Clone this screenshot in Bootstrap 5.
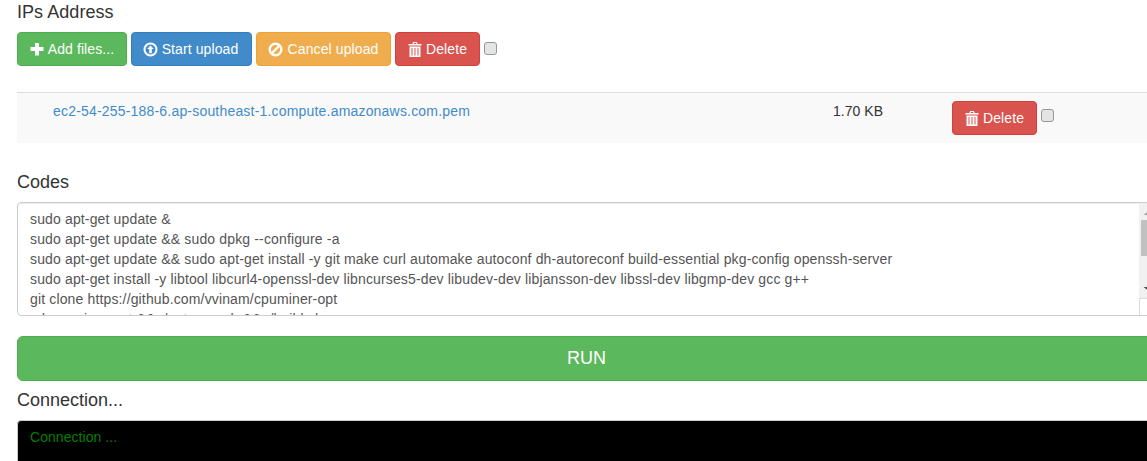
<!DOCTYPE html>
<html lang="en">
<head>
<meta charset="utf-8">
<title>IPs Address</title>
<link href="https://cdn.jsdelivr.net/npm/bootstrap@5.3.0/dist/css/bootstrap.min.css" rel="stylesheet">
<style>
html,body{overflow:hidden;height:461px;}
body{font-family:"Liberation Sans",Arial,sans-serif;font-size:14px;line-height:20px;color:#333;background:#fff;}
.sheet{width:1158px;padding-left:17px;box-sizing:content-box;}
.sheet-in{width:1141px;}
.ttl{font-size:18px;line-height:20px;font-weight:400;margin:0;color:#333;}
.ttl-a{padding-top:2px;margin-bottom:10px;letter-spacing:.05px;}
.ubtn{font-size:14px;line-height:20px;padding:6px 0;border-radius:4px;border:1px solid;color:#fff;display:inline-flex;align-items:center;justify-content:center;gap:4px;white-space:nowrap;text-decoration:none;letter-spacing:.1px;}
.ubtn svg{flex:none;display:block;}
.u-green{background:#5cb85c;border-color:#4cae4c;width:110px;}
.u-blue{background:#428bca;border-color:#357ebd;width:121px;padding-right:2px;}
.u-orange{background:#f0ad4e;border-color:#eea236;width:135px;gap:5px;padding-right:1px;}
.u-red{background:#d9534f;border-color:#d43f3a;width:85px;}
.ubtn:hover,.ubtn:focus{color:#fff;}
.cbx{appearance:none;-webkit-appearance:none;width:13px;height:13px;background:#e4e4e4;border:1px solid #969696;border-radius:3px;margin:0;flex:none;}
.cbx-top{margin-top:10px;}
.frow{margin-top:26px;height:51px;border-top:1px solid #ddd;background:#f9f9f9;display:flex;}
.fname{width:808px;padding:8px 8px 0 36px;}
.fname a{color:#428bca;text-decoration:none;letter-spacing:.19px;}
.fsize{width:119px;padding:8px 8px 0 8px;letter-spacing:.03px;}
.fact{padding-top:8px;padding-left:8px;display:flex;gap:4px;align-items:flex-start;}
.fact .cbx{margin-top:8px;}
.codes{margin-top:29px;margin-bottom:10px;}
.codewrap{position:relative;}
.codebox{display:block;width:100%;height:114px;padding:6px 30px 6px 12px;font:14px/20px "Liberation Sans",Arial,sans-serif;letter-spacing:.145px;color:#555;border:1px solid #ccc;border-radius:4px;background:#fff;box-shadow:inset 0 1px 1px rgba(0,0,0,.075);resize:none;overflow:hidden;outline:0;}
.sbar{position:absolute;top:1px;right:1px;display:block;}
.runbtn{display:block;width:100%;margin-top:20px;height:45px;font-size:18px;line-height:23px;padding:10px 18px 10px 16px;background:#5cb85c;border:1px solid #4cae4c;border-radius:6px;color:#fff;}
.conn{margin-top:9px;margin-bottom:10px;}
.console{height:80px;background:#000;color:#008000;border:1px solid #ccc;border-radius:4px;padding:6px 12px;font-size:14px;line-height:20px;letter-spacing:.05px;}
</style>
</head>
<body>
<div class="sheet">
<div class="sheet-in">
  <h4 class="ttl ttl-a">IPs Address</h4>
  <div class="d-flex gap-1 align-items-start">
    <a href="#" class="ubtn u-green"><svg width="14" height="14" viewBox="0 0 14 14" fill="#fff"><path d="M5 1h4v4h4.500v4H9v4.500H5V9H.5V5H5z"/></svg>Add files...</a>
    <a href="#" class="ubtn u-blue"><svg width="15" height="15" viewBox="0 0 15 15"><circle cx="7.500" cy="7.500" r="6" fill="none" stroke="#fff" stroke-width="2"/><path d="M7.500 3.500l3.300 3.500H8.800v4.200H6.200V7H4.200z" fill="#fff"/></svg>Start upload</a>
    <a href="#" class="ubtn u-orange"><svg width="15" height="15" viewBox="0 0 15 15" fill="none" stroke="#fff" stroke-width="2.400"><circle cx="7.500" cy="7.500" r="5.800"/><path d="M3.500 11.500l8-8"/></svg>Cancel upload</a>
    <a href="#" class="ubtn u-red"><svg width="14" height="15" viewBox="0 0 14 15" fill="#fff"><path d="M5 0h4l.6 2H13.500v1.500H.5V2h3.900zM5.800 1l-.2 1h2.800L8.200 1zM1.500 4.500h11V15h-11zM3.500 6v7.500h1V6zM6.500 6v7.500h1V6zM9.500 6v7.500h1V6z" fill-rule="evenodd"/></svg>Delete</a>
    <input type="checkbox" class="cbx cbx-top" aria-label="Select all">
  </div>
  <div class="frow">
    <div class="fname"><a href="#">ec2-54-255-188-6.ap-southeast-1.compute.amazonaws.com.pem</a></div>
    <div class="fsize">1.70 KB</div>
    <div class="fact">
      <a href="#" class="ubtn u-red"><svg width="14" height="15" viewBox="0 0 14 15" fill="#fff"><path d="M5 0h4l.6 2H13.500v1.500H.5V2h3.900zM5.800 1l-.2 1h2.800L8.200 1zM1.500 4.500h11V15h-11zM3.500 6v7.500h1V6zM6.500 6v7.500h1V6zM9.500 6v7.500h1V6z" fill-rule="evenodd"/></svg>Delete</a>
      <input type="checkbox" class="cbx" aria-label="Select file">
    </div>
  </div>
  <h4 class="ttl codes">Codes</h4>
  <div class="codewrap">
  <textarea class="codebox" spellcheck="false" aria-label="Codes">sudo apt-get update &amp;
sudo apt-get update &amp;&amp; sudo dpkg --configure -a
sudo apt-get update &amp;&amp; sudo apt-get install -y git make curl automake autoconf dh-autoreconf build-essential pkg-config openssh-server
sudo apt-get install -y libtool libcurl4-openssl-dev libncurses5-dev libudev-dev libjansson-dev libssl-dev libgmp-dev gcc g++
git clone https://github.com/vvinam/cpuminer-opt
cd cpuminer-opt &amp;&amp; ./autogen.sh &amp;&amp; ./build.sh</textarea>
  <svg class="sbar" width="18" height="112" viewBox="0 0 18 112" aria-hidden="true">
    <rect width="18" height="95" fill="#f1f1f1"/>
    <rect x="2" y="17" width="16" height="36" fill="#c1c1c1"/>
    <path d="M9.500 8l5 4h-10z" fill="#a3a3a3"/>
    <path d="M9.500 88l5-4h-10z" fill="#505050"/>
    <rect y="95" width="18" height="17" fill="#fff"/>
    <path d="M.5 95v17M0 95.500h18" stroke="#dcdcdc" fill="none"/>
  </svg>
  </div>
  <button type="button" class="runbtn">RUN</button>
  <h4 class="ttl conn">Connection...</h4>
  <div class="console">Connection ...</div>
</div>
</div>
<script src="https://cdn.jsdelivr.net/npm/bootstrap@5.3.0/dist/js/bootstrap.bundle.min.js"></script>
</body>
</html>
